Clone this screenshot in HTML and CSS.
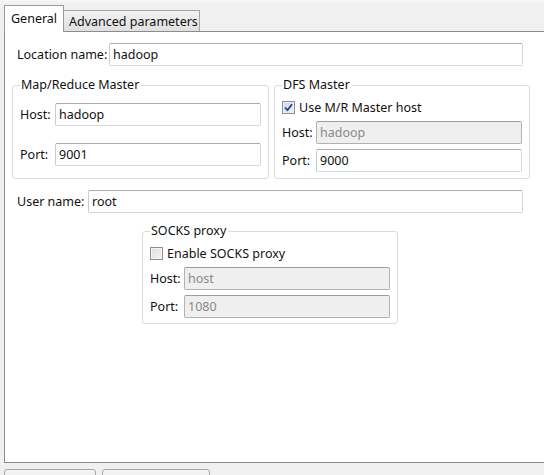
FILE: index.html
```html
<!DOCTYPE html>
<html>
<head>
<meta charset="utf-8">
<link rel="stylesheet" href="styles.css">
</head>
<body>
<div class="tabs">
  <div class="tab tab-active">General</div>
  <div class="tab tab-inactive">Advanced parameters</div>
</div>
<div class="panel">
  <div class="row row-location">
    <label class="lbl">Location name:</label>
    <div class="input">hadoop</div>
  </div>
  <div class="groups">
    <fieldset class="group group-mr">
      <legend>Map/Reduce Master</legend>
      <div class="grid grid-mr">
        <label class="lbl">Host:</label>
        <div class="input">hadoop</div>
        <label class="lbl">Port:</label>
        <div class="input">9001</div>
      </div>
    </fieldset>
    <fieldset class="group group-dfs">
      <legend>DFS Master</legend>
      <div class="check-row">
        <span class="check checked"><svg width="9" height="9" viewBox="0 0 9 9"><path d="M1 4.5 L3.5 7.2 L8 1.2" fill="none" stroke="#2b3f7a" stroke-width="1.8"/></svg></span>
        <span>Use M/R Master host</span>
      </div>
      <div class="grid grid-small">
        <label class="lbl">Host:</label>
        <div class="input disabled">hadoop</div>
        <label class="lbl">Port:</label>
        <div class="input">9000</div>
      </div>
    </fieldset>
  </div>
  <div class="row row-user">
    <label class="lbl">User name:</label>
    <div class="input">root</div>
  </div>
  <fieldset class="group group-socks">
    <legend>SOCKS proxy</legend>
    <div class="check-row">
      <span class="check"></span>
      <span>Enable SOCKS proxy</span>
    </div>
    <div class="grid grid-small">
      <label class="lbl">Host:</label>
      <div class="input disabled">host</div>
      <label class="lbl">Port:</label>
      <div class="input disabled">1080</div>
    </div>
  </fieldset>
</div>
<div class="buttons">
  <button class="btn btn-1"></button>
  <button class="btn btn-2"></button>
</div>
</body>
</html>
```
FILE: styles.css
```css
html, body {
  margin: 0;
  padding: 0;
}
body {
  background: #f0f0f0;
  font-family: "Noto Sans", "DejaVu Sans", sans-serif;
  font-size: 12.5px;
  color: #111;
  width: 544px;
  height: 475px;
  overflow: hidden;
}
.tabs {
  height: 31px;
  padding-left: 4px;
  display: flex;
  align-items: flex-end;
  background: linear-gradient(#f7f7f7 0, #f0f0f0 4px, #f0f0f0 100%);
}
.tab {
  box-sizing: border-box;
  display: flex;
  align-items: center;
  white-space: nowrap;
}
.tab-active {
  position: relative;
  width: 60px;
  height: 27px;
  margin-bottom: -1px;
  background: #fff;
  border: 1px solid #9a9a9a;
  border-bottom: none;
  padding-left: 6px;
  padding-bottom: 2px;
}
.tab-inactive {
  width: 136px;
  height: 21px;
  background: linear-gradient(#f2f2f2, #e0e0e0);
  border: 1px solid #a5a5a5;
  border-left: none;
  border-bottom: none;
  padding-left: 5px;
}
.panel {
  margin-left: 4px;
  width: 532px;
  height: 419px;
  background: #fff;
  border: 1px solid #8c8c8c;
  border-right: none;
  padding: 11px 0 0 7px;
  box-sizing: content-box;
}
.row {
  display: grid;
  align-items: center;
  width: 506px;
  padding-left: 5px;
}
.row-location {
  grid-template-columns: 92px 1fr;
}
.row-user {
  margin-top: 11px;
  grid-template-columns: 71px 1fr;
}
.lbl {
  white-space: nowrap;
}
.input {
  box-sizing: border-box;
  height: 23px;
  border: 1px solid #d4d7dc;
  border-top-color: #a9abb0;
  border-left-color: #c9ccd1;
  border-radius: 2px;
  padding-left: 3px;
  display: flex;
  align-items: center;
  background: #fff;
  white-space: nowrap;
}
.input.disabled {
  background: #efefef;
  color: #8a8a8a;
  border-color: #b2b2b2;
  border-top-color: #9d9d9d;
}
.groups {
  display: flex;
  gap: 5px;
  margin-top: 10px;
}
.group {
  box-sizing: border-box;
  margin: 0;
  border: 1px solid #dadada;
  border-radius: 3px;
  padding: 0 7px 0 7px;
  min-width: 0;
}
.group legend {
  padding: 0 2px 0 1px;
  line-height: 18px;
  height: 18px;
  margin-left: 0;
}
.group-mr {
  width: 257px;
  padding-bottom: 11px;
}
.group-dfs {
  width: 256px;
  padding-bottom: 6px;
}
.group-socks {
  width: 256px;
  margin-top: 9px;
  margin-left: 130px;
  padding-bottom: 5px;
}
.grid {
  display: grid;
  align-items: center;
}
.grid-mr {
  margin-top: 9px;
  grid-template-columns: 35px 1fr;
  row-gap: 17px;
}
.grid-small {
  margin-top: 5px;
  grid-template-columns: 34px 1fr;
  row-gap: 5px;
}
.check-row {
  margin-top: 4px;
  height: 18px;
  display: flex;
  align-items: center;
  gap: 4px;
  white-space: nowrap;
}
.check {
  box-sizing: border-box;
  width: 13px;
  height: 13px;
  border: 1px solid #8e8f8f;
  background: linear-gradient(135deg, #dcdcdc, #f6f6f6);
  box-shadow: inset 0 0 0 1px #f4f4f4;
  display: flex;
  align-items: center;
  justify-content: center;
}
.check.checked {
  background: linear-gradient(135deg, #c9d5f0, #eef2fb);
  box-shadow: inset 0 0 0 1px #e8eefa;
}
.buttons {
  display: flex;
  gap: 6px;
  padding-left: 4px;
  margin-top: 6px;
}
.btn {
  height: 24px;
  border: 1px solid #a6a6a6;
  border-radius: 3px;
  background: linear-gradient(#f6f6f6, #dedede);
  padding: 0;
}
.btn-1 {
  width: 92px;
}
.btn-2 {
  width: 108px;
}
```
